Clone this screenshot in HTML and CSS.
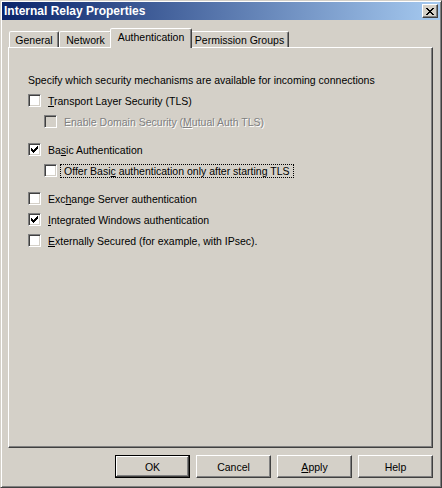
FILE: index.html
```html
<!DOCTYPE html>
<html>
<head>
<meta charset="utf-8">
<title>Internal Relay Properties</title>
<link rel="stylesheet" href="styles.css">
</head>
<body>
<div class="window">
  <div class="titlebar">
    <span class="title">Internal Relay Properties</span>
    <button class="close" aria-label="Close">
      <svg width="8" height="7" viewBox="0 0 8 7" shape-rendering="crispEdges"><path fill="#000" d="M0 0h2v1h-2z M6 0h2v1h-2z M1 1h2v1h-2z M5 1h2v1h-2z M2 2h4v1h-4z M3 3h2v1h-2z M2 4h4v1h-4z M1 5h2v1h-2z M5 5h2v1h-2z M0 6h2v1h-2z M6 6h2v1h-2z"/></svg>
    </button>
  </div>
  <div class="client">
    <div class="tabs">
      <div class="tab tab-general">General</div>
      <div class="tab tab-network">Network</div>
      <div class="tab tab-auth active">Authentication</div>
      <div class="tab tab-perm">Permission Groups</div>
    </div>
    <div class="panel">
      <div class="row"><span class="text">Specify which security mechanisms are available for incoming connections</span></div>
      <div class="group">
        <div class="row"><span class="cb"></span><span class="label"><u>T</u>ransport Layer Security (TLS)</span></div>
        <div class="row sub disabled"><span class="cb"></span><span class="label">Enable Domain Security (<u>M</u>utual Auth TLS)</span></div>
      </div>
      <div class="group spaced">
        <div class="row"><span class="cb"><svg width="7" height="7" viewBox="0 0 7 7" shape-rendering="crispEdges"><path fill="#000" d="M6 0h1v1h-1z M5 1h2v1h-2z M0 2h1v1h-1z M4 2h3v1h-3z M0 3h2v1h-2z M3 3h3v1h-3z M0 4h5v1h-5z M1 5h3v1h-3z M2 6h1v1h-1z"/></svg></span><span class="label">Ba<u>s</u>ic Authentication</span></div>
        <div class="row sub"><span class="cb"></span><span class="label focus">Offer Basi<u>c</u> authentication only after starting TLS</span></div>
      </div>
      <div class="group spaced">
        <div class="row"><span class="cb"></span><span class="label">Exc<u>h</u>ange Server authentication</span></div>
        <div class="row"><span class="cb"><svg width="7" height="7" viewBox="0 0 7 7" shape-rendering="crispEdges"><path fill="#000" d="M6 0h1v1h-1z M5 1h2v1h-2z M0 2h1v1h-1z M4 2h3v1h-3z M0 3h2v1h-2z M3 3h3v1h-3z M0 4h5v1h-5z M1 5h3v1h-3z M2 6h1v1h-1z"/></svg></span><span class="label"><u>I</u>ntegrated Windows authentication</span></div>
        <div class="row"><span class="cb"></span><span class="label"><u>E</u>xternally Secured (for example, with IPsec).</span></div>
      </div>
    </div>
    <div class="buttons">
      <button class="btn default">OK</button>
      <button class="btn">Cancel</button>
      <button class="btn"><u>A</u>pply</button>
      <button class="btn">Help</button>
    </div>
  </div>
</div>
</body>
</html>
```

FILE: styles.css
```css
* {
  box-sizing: border-box;
}

html,
body {
  margin: 0;
  background: #d4d0c8;
  font-family: "Liberation Sans", Arial, sans-serif;
  font-size: 10.5px;
  color: #000;
}

.window {
  width: 442px;
  height: 488px;
  display: flex;
  flex-direction: column;
  border: 1px solid;
  border-color: #d4d0c8 #404040 #404040 #d4d0c8;
  box-shadow: inset 1px 1px #fff, inset -1px -1px #808080;
  padding: 1px;
}

.titlebar {
  height: 18px;
  flex: none;
  display: flex;
  align-items: center;
  justify-content: space-between;
  padding: 0 2px 0 2px;
  background: linear-gradient(to right, #0a246a, #a6caf0);
  color: #fff;
  font-weight: bold;
  font-size: 12px;
}

.close {
  width: 16px;
  height: 14px;
  padding: 0;
  background: #d4d0c8;
  border: 1px solid;
  border-color: #fff #404040 #404040 #fff;
  box-shadow: inset -1px -1px #808080, inset 1px 1px #d4d0c8;
  display: flex;
  align-items: center;
  justify-content: center;
}

.close svg {
  display: block;
}

.client {
  flex: 1;
  display: flex;
  flex-direction: column;
  padding: 8px 7px 8px 6px;
}

.tabs {
  height: 19px;
  flex: none;
  display: flex;
  align-items: flex-end;
  padding-left: 1px;
}

.tab {
  height: 16px;
  flex: none;
  display: flex;
  align-items: center;
  justify-content: center;
  border: 1px solid;
  border-bottom: 0;
  border-color: #fff #404040 transparent #fff;
  border-radius: 2px 2px 0 0;
  box-shadow: inset -1px 0 #808080;
  background: #d4d0c8;
}

.tab-general { width: 50px; }
.tab-network { width: 53px; }
.tab-auth { width: 78px; }
.tab-perm { width: 99px; }

.tab.active {
  width: 82px;
  height: 20px;
  margin: 0 -2px -1px;
  padding-bottom: 3px;
  position: relative;
  z-index: 1;
}

.panel {
  flex: 1;
  border: 1px solid;
  border-color: #fff #404040 #404040 #fff;
  box-shadow: inset -1px -1px #808080;
  padding: 21px 19px 0;
}

.row {
  height: 21px;
  display: flex;
  align-items: center;
  white-space: nowrap;
}

.group.spaced {
  margin-top: 7px;
}

.sub {
  padding-left: 16px;
}

.cb {
  width: 13px;
  height: 13px;
  flex: none;
  display: flex;
  align-items: center;
  justify-content: center;
  background: #fff;
  border: 1px solid;
  border-color: #808080 #fff #fff #808080;
  box-shadow: inset 1px 1px #404040, inset -1px -1px #d4d0c8;
}

.cb svg {
  display: block;
}

.disabled .cb {
  background: #d4d0c8;
}

.label {
  margin-left: 3px;
  padding: 0 3px;
  border: 1px dotted transparent;
  line-height: 12px;
}

.label.focus {
  border-color: #000;
}

.disabled .label {
  color: #808080;
  text-shadow: 1px 1px 0 #fff;
}

.buttons {
  flex: none;
  display: flex;
  justify-content: flex-end;
  gap: 6px;
  margin-top: 7px;
}

.btn {
  width: 75px;
  height: 23px;
  padding: 0;
  font: inherit;
  color: #000;
  background: #d4d0c8;
  border: 1px solid;
  border-color: #fff #404040 #404040 #fff;
  box-shadow: inset -1px -1px #808080, inset 1px 1px #d4d0c8;
}

.btn.default {
  border-color: #000;
  box-shadow: inset -1px -1px #404040, inset 1px 1px #fff, inset -2px -2px #808080;
}
```
